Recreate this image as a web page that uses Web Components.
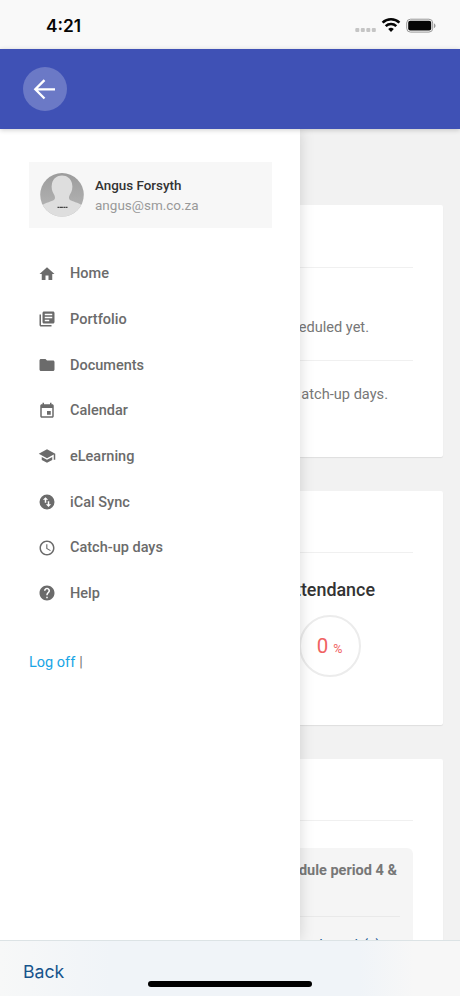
<!DOCTYPE html>
<html lang="en"><head><meta charset="utf-8"><title>Student portal</title>
<style>html,body{margin:0;height:100%;overflow:hidden}body{font-family:Roboto,sans-serif;background:#f2f2f2}</style></head>
<body><app-screen></app-screen>
<script>
const define=(name,html)=>customElements.define(name,class extends HTMLElement{
  connectedCallback(){ if(this.shadowRoot)return; const t=document.createElement('template');
    t.innerHTML=typeof html==='function'?html(this):html;
    this.attachShadow({mode:'open'}).append(t.content.cloneNode(true)); }
});
const icons={
 home:'<path d="M10 20v-6h4v6h5v-8h3L12 3 2 12h3v8z"/>',
 portfolio:'<path d="M4 6H2v14c0 1.100.9 2 2 2h14v-2H4V6zm16-4H8c-1.100 0-2 .9-2 2v12c0 1.100.9 2 2 2h12c1.100 0 2-.9 2-2V4c0-1.100-.9-2-2-2zm-1 9H9V9h10v2zm-4 4H9v-2h6v2zm4-8H9V5h10v2z"/>',
 folder:'<path d="M10 4H4c-1.100 0-2 .9-2 2v12c0 1.100.9 2 2 2h16c1.100 0 2-.9 2-2V8c0-1.100-.9-2-2-2h-8l-2-2z"/>',
 calendar:'<path d="M17 12h-5v5h5v-5zM16 1v2H8V1H6v2H5c-1.110 0-2 .9-2 2v14c0 1.100.89 2 2 2h14c1.100 0 2-.9 2-2V5c0-1.100-.9-2-2-2h-1V1h-2zm3 18H5V8h14v11z"/>',
 school:'<path d="M5 13.180v4L12 21l7-3.820v-4L12 17l-7-3.820zM12 3 1 9l11 6 9-4.910V17h2V9L12 3z"/>',
 sync:'<path fill-rule="evenodd" d="M12 2a10 10 0 1 0 0 20 10 10 0 0 0 0-20zM6.500 9 10 5.500 13.500 9H11v4H9V9H6.500zm11 6L14 18.500 10.500 15H13v-4h2v4h2.500z"/>',
 clock:'<path d="M11.990 2C6.470 2 2 6.480 2 12s4.470 10 9.990 10C17.520 22 22 17.520 22 12S17.520 2 11.990 2zM12 20c-4.420 0-8-3.580-8-8s3.580-8 8-8 8 3.580 8 8-3.580 8-8 8zm.5-13H11v6l5.250 3.150.75-1.230-4.500-2.670z"/>',
 help:'<path d="M12 2C6.480 2 2 6.480 2 12s4.480 10 10 10 10-4.480 10-10S17.520 2 12 2zm1 17h-2v-2h2v2zm2.070-7.750-.9.920C13.450 12.900 13 13.500 13 15h-2v-.5c0-1.100.45-2.100 1.170-2.830l1.240-1.260c.37-.36.59-.86.59-1.410 0-1.100-.9-2-2-2s-2 .9-2 2H8c0-2.210 1.790-4 4-4s4 1.790 4 4c0 .88-.36 1.680-.93 2.250z"/>'
};
define('status-bar',`<style>:host{display:flex;height:49px;box-sizing:border-box;padding:2px 24px 0 46px;align-items:center;justify-content:space-between;background:#f9f9f9;font:600 17.300px Inter,sans-serif;color:#050505}svg{display:block}</style>
<span>4:21</span><svg width="81" height="18" viewBox="0 0 81 18"><g fill="#c5c5c5"><rect x="0.300" y="11" width="4" height="4" rx="1"/><rect x="5.800" y="11" width="4" height="4" rx="1"/><rect x="11.300" y="11" width="4" height="4" rx="1"/><rect x="16.800" y="11" width="4" height="4" rx="1"/></g>
<g fill="none" stroke="#050505" stroke-width="2.600"><path d="M27.600 5.600a12.200 12.200 0 0 1 16.800 0"/><path d="M30.700 9.100a7.700 7.700 0 0 1 10.600 0"/></g><path d="M33.200 12a4.100 4.100 0 0 1 5.600 0L36 15z" fill="#050505"/>
<rect x="51.700" y="2.200" width="26" height="12.900" rx="3.800" fill="none" stroke="#999"/><rect x="53.200" y="3.800" width="23" height="9.700" rx="2" fill="#050505"/><path d="M79 6.500v4.500c2-.7 2-3.800 0-4.500z" fill="#999"/></svg>`);
define('top-bar',`<style>:host{display:flex;height:80px;box-sizing:border-box;align-items:center;padding-left:23px;background:#3f51b5;box-shadow:0 1px 5px #0003;position:relative;z-index:2}.b{width:44px;height:44px;border-radius:50%;background:#6b79c6;display:grid;place-items:center}svg{display:block}</style>
<div class="b"><svg width="44" height="44" viewBox="0 0 44 44" fill="none" stroke="#fff" stroke-width="2.300"><path d="M32 22.300H12.500M21.500 13.100 12.300 22.300l9.200 9.200"/></svg></div>`);
define('user-card',`<style>:host{display:flex;box-sizing:border-box;width:243px;height:66px;background:#f7f7f7;align-items:center;padding-left:11px;gap:11px}svg{display:block}.n{font-weight:500;font-size:13.400px;line-height:20px;color:#333}.e{font-size:13.500px;line-height:19px;color:#999}</style>
<svg width="44" height="44" viewBox="0 0 44 44"><defs><clipPath id="c"><circle cx="22" cy="21.800" r="21.800"/></clipPath><linearGradient id="g" x2="0" y2="1"><stop stop-color="#9c9c9c"/><stop offset="1" stop-color="#b8b8b8"/></linearGradient></defs><g clip-path="url(#c)"><path fill="url(#g)" d="M0 0h44v44H0z"/><path fill="#dedede" d="M0 44V34c4-4 10-5 13-6.500 3-1.500 2-4 1-6-2-3-3-7-2-11 1-5 5-8 10-8s9 3 10 8c1 4 0 8-2 11-1 2-2 4.500 1 6 3 1.500 9 2.500 13 6.500v10z"/><path d="M17.500 34.300h10" stroke="#444" stroke-width="1.300" stroke-dasharray="2 .4 3 .5"/></g></svg>
<div><div class="n"><slot name="name"></slot></div><div class="e"><slot name="email"></slot></div></div>`);
define('menu-item',e=>`<style>:host{display:flex;height:45.660px;align-items:center;gap:14px;padding-left:9px;color:#6b6b6b;font-weight:500;font-size:14.500px}svg{width:18px;height:18px;fill:#6b6b6b;display:block}</style><svg viewBox="0 0 24 24">${icons[e.getAttribute('icon')]}</svg><slot></slot>`);
define('side-drawer',`<style>:host{display:block;box-sizing:border-box;padding:34px 28px 0 29px;background:#fff;box-shadow:0 0 14px #00000026;position:relative;z-index:1}user-card{margin-top:-.6px}nav{margin-top:22.600px}.log{display:flex;gap:4px;margin-top:37.500px;font-size:14.500px;line-height:18px;color:#777}a{color:#18a5e5}</style>
<user-card><span slot="name">Angus Forsyth</span><span slot="email">angus@sm.co.za</span></user-card>
<nav><menu-item icon="home">Home</menu-item><menu-item icon="portfolio">Portfolio</menu-item><menu-item icon="folder">Documents</menu-item><menu-item icon="calendar">Calendar</menu-item><menu-item icon="school">eLearning</menu-item><menu-item icon="sync">iCal Sync</menu-item><menu-item icon="clock">Catch-up days</menu-item><menu-item icon="help">Help</menu-item></nav>
<div class="log"><a>Log off</a><span>|</span></div>`);
define('panel-card',`<style>:host{display:block;flex:none;background:#fff;border-radius:0 2px 2px 0;box-shadow:0 1px 1px #00000014;box-sizing:border-box;padding-right:30px}.h{height:61.500px;border-bottom:1px solid #f0f0f0}</style><div class="h"></div><slot></slot>`);
define('row-text',`<style>:host{display:flex;justify-content:flex-end;align-items:center;white-space:nowrap;color:#777;font-size:14.600px}</style><slot></slot>`);
define('score-ring',`<style>:host{display:flex;box-sizing:border-box;width:62px;height:62px;border:2px solid #ececec;border-radius:50%;align-items:baseline;justify-content:center;gap:5px;line-height:58px;color:#f06262;font-size:20.500px}span{margin-left:-1px}small{font-size:12.500px}</style><span>0</span><small>%</small>`);
define('dash-board',`<style>:host{display:flex;flex-direction:column;box-sizing:border-box;padding:76px 17px 0 0;overflow:hidden;background:#f2f2f2}
.a{height:252px}.b{height:234px;margin-top:33.500px}.c{height:400px;margin-top:34px}.r1{height:92px;border-bottom:1px solid #f0f0f0}.r1 row-text{height:119px}.r2{height:66px;padding-right:25px}.r1 row-text{padding-right:44px}.t{height:73px;padding-right:38px;font-weight:500;font-size:17.900px;color:#333}score-ring{margin-left:-1px;margin-top:-11px}.box{background:#f5f5f5;border-radius:0 6px 0 0;margin-top:27px;padding:0 13px 0 0;height:200px}.box .x{height:68px;border-bottom:1px solid #e9e9e9;padding-right:3px}.x row-text{height:44px;font-weight:700;font-size:14.500px}.f{height:56px;padding-right:19.500px;color:#1a5a96}</style>
<panel-card class="a"><div class="r1"><row-text>eduled yet.</row-text></div><row-text class="r2">atch-up days.</row-text></panel-card>
<panel-card class="b"><row-text class="t">ttendance</row-text><score-ring></score-ring></panel-card>
<panel-card class="c"><div class="box"><div class="x"><row-text>dule period 4 &amp;</row-text></div><row-text class="f">d result(s)</row-text></div></panel-card>`);
define('bottom-bar',`<style>:host{display:grid;grid-template-columns:148px 164px 1fr;height:56px;box-sizing:border-box;border-top:1px solid #dce3e5;background:linear-gradient(90deg,#f7f8f8,#f0f4f8 24%,#f0f4f8 78%,#f7f7f7 90%);position:relative;z-index:3}span{padding:19px 0 0 23px;font:400 17.700px/24px Inter,sans-serif;color:#17548c}i{height:6px;border-radius:3px;background:#000;margin-top:40px}</style><span>Back</span><i></i>`);
define('app-screen',`<style>:host{display:grid;grid-template-rows:49px 80px 811px 56px;width:460px;height:996px;overflow:hidden}main{display:grid;grid-template-columns:300px 160px;min-height:0;overflow:hidden}</style>
<status-bar></status-bar><top-bar></top-bar><main><side-drawer></side-drawer><dash-board></dash-board></main><bottom-bar></bottom-bar>`);
</script></body></html>
